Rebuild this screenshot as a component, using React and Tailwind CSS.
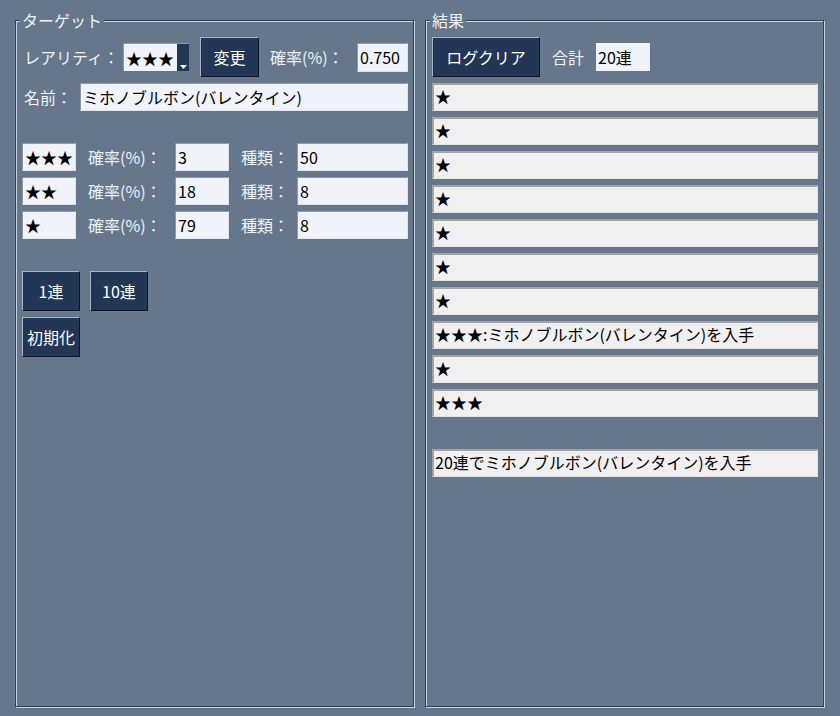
const FONT = { fontFamily: '"Noto Sans CJK JP", "Noto Sans", sans-serif' };

const Field = ({ w, h = 28, children, className = "" }) => (
  <div
    className={`flex items-center overflow-hidden whitespace-nowrap border-t border-l border-[#8e98a6] border-b border-r border-b-[#dfe5ee] border-r-[#dfe5ee] bg-[#f0f4fa] pb-[1px] pl-[2px] text-[16px] leading-none text-black ${w} ${className}`}
    style={{ height: h }}
  >
    {children}
  </div>
);

const Btn = ({ w, children }) => (
  <button className={`flex h-[40px] items-center justify-center border border-t-[#a7b3c5] border-l-[#a7b3c5] border-b-[#0d1524] border-r-[#0d1524] bg-[#243656] text-[16px] leading-none text-white ${w}`}>
    {children}
  </button>
);

const Label = ({ children, className = "" }) => (
  <span className={`whitespace-nowrap text-[16px] leading-none text-[#eef2f7] ${className}`}>{children}</span>
);

const Group = ({ title, children }) => (
  <div className="relative h-[687px] w-[399px] border border-[#34414f] shadow-[inset_1px_1px_0_#c9d3df,1px_1px_0_#c9d3df]">
    <span className="absolute left-[4px] top-[-11px] bg-[#66778c] px-[2px] text-[16px] leading-[20px] text-[#eef2f7]">
      {title}
    </span>
    {children}
  </div>
);

const tiers = [
  { stars: "★★★", rate: "3", kinds: "50" },
  { stars: "★★", rate: "18", kinds: "8" },
  { stars: "★", rate: "79", kinds: "8" },
];

const results = ["★", "★", "★", "★", "★", "★", "★", "★★★:ミホノブルボン(バレンタイン)を入手", "★", "★★★"];

const Row = ({ children }) => (
  <div className="flex h-[28px] w-[386px] items-center overflow-hidden whitespace-nowrap border-t-2 border-l-2 border-[#a3a3a3] border-b border-r border-b-[#e4e4e4] border-r-[#e4e4e4] bg-[#f0f0f0] pb-[3px] pl-[1px] text-[16px] leading-none text-black">
    {children}
  </div>
);

export default function App() {
  return (
    <div className="flex h-[716px] w-[840px] gap-[11px] bg-[#66778c] pl-[15px] pt-[20px]" style={FONT}>
      <Group title="ターゲット">
        <div className="flex flex-col pl-[6px] pt-[16px]">
          <div className="flex h-[40px] items-center">
            <Label className="ml-[2px] w-[99px]">レアリティ：</Label>
            <div className="flex h-[28px] w-[66px] border-t border-l border-[#8e98a6] bg-[#f0f4fa]">
              <span className="flex flex-1 items-center pl-[2px] text-[16px] leading-none text-black">★★★</span>
              <span className="flex w-[12px] items-end justify-center bg-[#243656] pb-[2px]">
                <svg width="7" height="4" viewBox="0 0 7 4">
                  <path d="M0 0h7L3.5 4z" fill="#fff" />
                </svg>
              </span>
            </div>
            <div className="ml-[11px]">
              <Btn w="w-[59px]">変更</Btn>
            </div>
            <Label className="ml-[11px] w-[87px]">確率(%)：</Label>
            <Field w="w-[51px]" h={29}>0.750</Field>
          </div>
          <div className="mt-[6px] flex items-center">
            <Label className="ml-[2px] w-[56px]">名前：</Label>
            <Field w="w-[328px]">ミホノブルボン(バレンタイン)</Field>
          </div>
          <div className="mt-[32px] flex flex-col gap-[6px]">
            {tiers.map((t) => (
              <div key={t.stars} className="flex items-center">
                <Field w="w-[54px]">{t.stars}</Field>
                <Label className="ml-[12px] w-[87px]">確率(%)：</Label>
                <Field w="w-[54px]">{t.rate}</Field>
                <Label className="ml-[12px] w-[56px]">種類：</Label>
                <Field w="w-[111px]">{t.kinds}</Field>
              </div>
            ))}
          </div>
          <div className="mt-[32px] flex gap-[10px]">
            <Btn w="w-[58px]">1連</Btn>
            <Btn w="w-[58px]">10連</Btn>
          </div>
          <div className="mt-[6px] flex">
            <Btn w="w-[58px]">初期化</Btn>
          </div>
        </div>
      </Group>

      <Group title="結果">
        <div className="flex flex-col pl-[6px] pt-[16px]">
          <div className="flex h-[40px] items-center">
            <Btn w="w-[108px]">ログクリア</Btn>
            <Label className="ml-[12px] w-[44px]">合計</Label>
            <Field w="w-[54px]" className="border-none bg-[#f0f4fa]">20連</Field>
          </div>
          <div className="mt-[6px] flex flex-col gap-[6px]">
            {results.map((r, i) => (
              <Row key={i}>{r}</Row>
            ))}
          </div>
          <div className="mt-[32px]">
            <Row>20連でミホノブルボン(バレンタイン)を入手</Row>
          </div>
        </div>
      </Group>
    </div>
  );
}
